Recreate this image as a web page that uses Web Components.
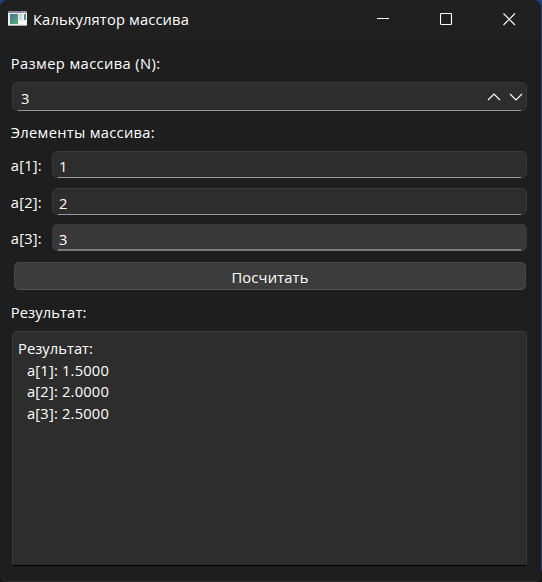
<!DOCTYPE html>
<html lang="ru"><head><meta charset="utf-8"><title>Калькулятор массива</title>
<style>html,body{margin:0;height:100%;overflow:hidden;background:linear-gradient(#233e7c 570px,#191919 572px)}</style></head>
<body><calc-window></calc-window>
<script>
const define=(name,html,setup)=>customElements.define(name,class extends HTMLElement{
  connectedCallback(){
    if(this.shadowRoot)return;
    this.attachShadow({mode:'open'}).innerHTML=html;
    if(setup)setup(this);
  }
});

// A single line of text whose tracking is adjusted to a given width.
define('ui-text',`<style>:host{display:block;white-space:pre;line-height:20px;height:20px}span{display:inline-block}</style><span><slot></slot></span>`,el=>{
  const s=el.shadowRoot.querySelector('span'),w=+el.getAttribute('w');
  if(w)s.style.letterSpacing=(w-s.getBoundingClientRect().width)/el.textContent.length+'px';
});

define('title-bar',`<style>
:host{display:flex;height:38px;background:#202020;align-items:center;box-sizing:border-box;padding-left:8px}
.icon{width:19px;height:15px;margin-right:6px;margin-top:-1px}
ui-text{flex:1}
.b{width:64px;display:flex;justify-content:center;margin-top:1px}
.b:last-child{width:63px}
</style>
<svg class="icon" viewBox="0 0 19 15"><defs><linearGradient id="g" x2="1" y2="1"><stop stop-color="#426f9b"/><stop offset="1" stop-color="#55b56d"/></linearGradient></defs>
<path fill="#eeeeee" d="M0 0h19v15H0z"/><path fill="#858996" d="M0 0h19v2H0z"/><path fill="#d8dce0" d="M14 .5h1v1h-1zM16 .5h1v1h-1z"/><path fill="url(#g)" d="M2 3h8v10H2z"/><path fill="#d2d4d6" d="M11 3h3v6h-3z"/><path fill="#4e9295" d="M16 3h2v6h-2z"/><path fill="#fff" d="M11 10h7v3h-7z"/><path fill="#aaa" d="M0 14h19v1H0z"/></svg>
<ui-text w="156">Калькулятор массива</ui-text>
<div class="b"><svg width="13" height="13"><path d="M1 5.5h12" stroke="#fff"/></svg></div>
<div class="b"><svg width="13" height="13"><rect x=".5" y=".5" width="11" height="11" rx="1" fill="none" stroke="#fff" stroke-width="1.1"/></svg></div>
<div class="b"><svg width="13" height="13"><path d="M.5.5l11.5 11.5M12 .5L.5 12" stroke="#fff" stroke-width="1.1"/></svg></div>`);

define('text-field',`<style>
:host{display:flex;position:relative;box-sizing:border-box;height:27px;flex:1;align-items:center;background:var(--fill,#2d2d2d);border:1px solid #393939;border-radius:5px;padding:3px 3px 0 6px}
:host::after{content:"";position:absolute;left:5px;right:5px;bottom:-1px;height:var(--line,1px);background:var(--line-color,#9a9a9a)}
</style><slot></slot>`);

define('field-row',`<style>
:host{display:flex;height:27px;align-items:center}
.l{width:40px}
</style><div class="l"><slot name="label"></slot></div><text-field><slot></slot></text-field>`);

define('spin-arrows',`<style>:host{display:flex;gap:8px;margin-left:auto;margin-top:-1px}</style>
<svg width="14" height="8"><path d="M1 7l6-6 6 6" fill="none" stroke="#fff" stroke-width="1.15"/></svg>
<svg width="14" height="8"><path d="M1 1l6 6 6-6" fill="none" stroke="#fff" stroke-width="1.15"/></svg>`);

define('push-button',`<style>:host{display:flex;box-sizing:border-box;height:28px;justify-content:center;align-items:center;background:#3c3c3c;border:1px solid #484848;border-bottom-color:#535353;border-radius:5px;padding-top:2px}</style><slot></slot>`);

define('result-box',`<style>:host{display:block;box-sizing:border-box;height:235px;background:#2d2d2d;border:1px solid #3a3a3a;border-bottom-color:#000;border-radius:5px 5px 2px 2px;padding:6px 5px}</style><slot></slot>`);

define('calc-window',`<style>
:host{display:block;box-sizing:border-box;width:541px;height:582px;background:#1e1e1e;border-radius:8px;overflow:hidden;color:#fff;font:14.7px "Open Sans","Noto Sans",sans-serif;border-bottom:1px solid #303030}
main{display:flex;flex-direction:column;padding:15px 14px 0 12px}
main>ui-text,ui-text[slot]{text-indent:-.6px}
.rows{display:flex;flex-direction:column;margin:9px 0 11px}
.rows>:nth-child(2){margin:10px 0 9px}
.spin{flex:none;height:29px;margin:9px 0 11px;padding:2px 3px 0 8px}
.hot{--fill:#393939;--line:2px;--line-color:#7c7c7c}
push-button{margin:0 1px 12px 2px}
.res{margin-bottom:9px}
result-box ui-text{height:21.7px}
.i{margin-left:9px}
</style>
<title-bar></title-bar>
<main>
<ui-text w="149">Размер массива (N):</ui-text>
<text-field class="spin"><ui-text>3</ui-text><spin-arrows></spin-arrows></text-field>
<ui-text w="143.5">Элементы массива:</ui-text>
<div class="rows">
<field-row><ui-text slot="label" w="30.5">a[1]:</ui-text><ui-text>1</ui-text></field-row>
<field-row><ui-text slot="label" w="30.5">a[2]:</ui-text><ui-text>2</ui-text></field-row>
<field-row class="hot"><ui-text slot="label" w="30.5">a[3]:</ui-text><ui-text>3</ui-text></field-row>
</div>
<push-button><ui-text w="77">Посчитать</ui-text></push-button>
<ui-text class="res" w="75">Результат:</ui-text>
<result-box><ui-text w="75">Результат:</ui-text><ui-text class="i" w="82">a[1]: 1.5000</ui-text><ui-text class="i" w="82">a[2]: 2.0000</ui-text><ui-text class="i" w="82">a[3]: 2.5000</ui-text></result-box>
</main>`);
</script></body></html>
